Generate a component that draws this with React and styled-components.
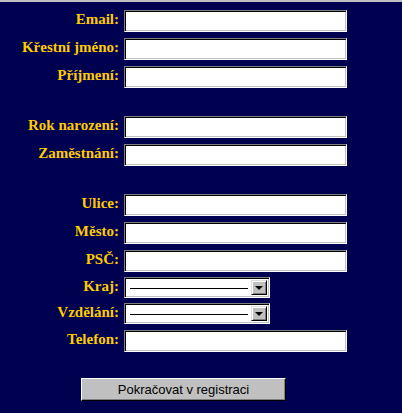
import React from "react";
import styled, { createGlobalStyle } from "styled-components";

const Global = createGlobalStyle`
  html, body {
    margin: 0;
    padding: 0;
    background: #000050;
  }
  body {
    min-height: 100vh;
    font-family: "Liberation Serif", "Times New Roman", serif;
  }
`;

const Page = styled.div`
  min-height: 413px;
  background: #000050;
  border-top: 2px solid #c0c0c0;
  box-sizing: border-box;
  padding: 8px 0 0 20px;
`;

const Form = styled.form`
  width: 327px;
  display: flex;
  flex-direction: column;
  gap: 6px;
  margin: 0;
`;

const Row = styled.div`
  display: flex;
  align-items: flex-start;
  gap: 5px;
  margin-top: ${(p) => (p.$select ? "-1px" : "0")};
`;

const Spacer = styled.div`
  height: 16px;
`;

const Label = styled.label`
  width: 99px;
  flex: none;
  text-align: right;
  color: #ffcc00;
  font-family: "Liberation Serif", "Times New Roman", serif;
  font-weight: bold;
  font-size: 15px;
  line-height: 18px;
  white-space: nowrap;
`;

const Input = styled.input`
  box-sizing: border-box;
  width: 223px;
  height: 22px;
  margin: 0;
  padding: 2px 3px;
  background: #fff;
  border: 1px solid;
  border-color: #808080 #ffffff #ffffff #808080;
  box-shadow: inset 1px 1px 0 #000, inset -1px -1px 0 #c0c0c0;
  font-family: "Liberation Sans", Arial, sans-serif;
  font-size: 13px;
  outline: none;
`;

const Select = styled.div`
  box-sizing: border-box;
  width: 146px;
  height: 21px;
  background: #fff;
  border: 1px solid;
  border-color: #808080 #ffffff #ffffff #808080;
  box-shadow: inset 1px 1px 0 #000, inset -1px -1px 0 #c0c0c0;
  display: flex;
  align-items: stretch;
  padding: 2px 2px 2px 5px;
`;

const Dash = styled.span`
  flex: 1;
  align-self: flex-start;
  margin-top: 8px;
  margin-right: 3px;
  height: 0;
  border-top: 1px solid #000;
`;

const ArrowButton = styled.span`
  box-sizing: border-box;
  width: 16px;
  flex: none;
  background: #c0c0c0;
  border: 1px solid;
  border-color: #dfdfdf #000 #000 #dfdfdf;
  box-shadow: inset 1px 1px 0 #fff, inset -1px -1px 0 #808080;
  display: flex;
  align-items: center;
  justify-content: center;
`;

const Arrow = styled.span`
  width: 0;
  height: 0;
  border-left: 4px solid transparent;
  border-right: 4px solid transparent;
  border-top: 4px solid #000;
`;

const Submit = styled.button`
  align-self: center;
  margin-top: 20px;
  box-sizing: border-box;
  width: 205px;
  height: 23px;
  padding: 0;
  background: #c0c0c0;
  border: 1px solid;
  border-color: #ffffff #000 #000 #ffffff;
  box-shadow: inset -1px -1px 0 #808080;
  font-family: "Liberation Sans", Arial, sans-serif;
  font-size: 13px;
  color: #000;
  cursor: pointer;
`;

const DropDown = () => (
  <Select role="listbox">
    <Dash />
    <ArrowButton>
      <Arrow />
    </ArrowButton>
  </Select>
);

const fields1 = ["Email:", "Křestní jméno:", "Příjmení:"];
const fields2 = ["Rok narození:", "Zaměstnání:"];
const fields3 = ["Ulice:", "Město:", "PSČ:"];

const TextRow = ({ label }) => (
  <Row>
    <Label>{label}</Label>
    <Input type="text" />
  </Row>
);

export default function App() {
  return (
    <>
      <Global />
      <Page>
        <Form onSubmit={(e) => e.preventDefault()}>
          {fields1.map((f) => (
            <TextRow key={f} label={f} />
          ))}
          <Spacer />
          {fields2.map((f) => (
            <TextRow key={f} label={f} />
          ))}
          <Spacer />
          {fields3.map((f) => (
            <TextRow key={f} label={f} />
          ))}
          <Row $select>
            <Label>Kraj:</Label>
            <DropDown />
          </Row>
          <Row $select>
            <Label>Vzdělání:</Label>
            <DropDown />
          </Row>
          <TextRow label="Telefon:" />
          <Submit type="submit">Pokračovat v registraci</Submit>
        </Form>
      </Page>
    </>
  );
}
